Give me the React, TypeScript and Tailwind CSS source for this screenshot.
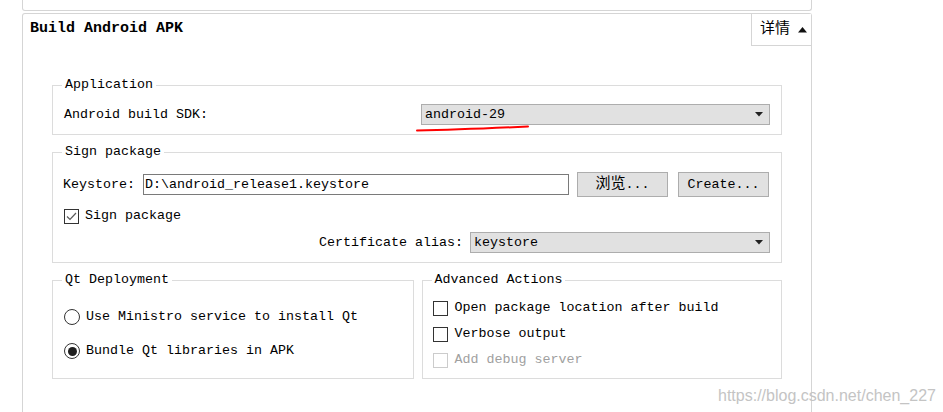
import React from 'react';

const mono = "font-[family-name:'Liberation_Mono','Noto_Sans_CJK_SC',monospace]";

const Arrow = () => (
  <svg width="8" height="5" viewBox="0 0 8 5" className="shrink-0">
    <polygon points="0,0 8,0 4,4.5" fill="#222" />
  </svg>
);

const Combo = ({ value, className }: { value: string; className?: string }) => (
  <div
    className={`flex items-center h-[21px] bg-[#e1e1e1] border border-[#adadad] pl-[3px] pr-[6px] ${className ?? ''}`}
  >
    <span className="flex-1 leading-[16px]">{value}</span>
    <Arrow />
  </div>
);

const Button = ({ children }: { children: React.ReactNode }) => (
  <div className="flex items-center justify-center w-[91px] h-[25px] bg-[#e1e1e1] border border-[#adadad]">
    {children}
  </div>
);

const Check = ({ checked, disabled }: { checked?: boolean; disabled?: boolean }) => (
  <div
    className={`flex items-center justify-center w-[15px] h-[15px] bg-white border ${
      disabled ? 'border-[#cccccc]' : 'border-[#333333]'
    }`}
  >
    {checked && (
      <svg width="11" height="9" viewBox="0 0 11 9">
        <path d="M1 4.5 L4 7.5 L10 1" fill="none" stroke="#5a5a5a" strokeWidth="1.2" />
      </svg>
    )}
  </div>
);

const Radio = ({ checked }: { checked?: boolean }) => (
  <div className="flex items-center justify-center w-[16px] h-[16px] rounded-full bg-white border border-[#333333]">
    {checked && <div className="w-[9px] h-[9px] rounded-full bg-[#1f1f1f]" />}
  </div>
);

const Group = ({
  title,
  className,
  children,
}: {
  title: string;
  className?: string;
  children: React.ReactNode;
}) => (
  <fieldset className={`border border-[#dcdcdc] ${className ?? ''}`}>
    <legend className="ml-[9px] px-[3px] leading-[16px]">{title}</legend>
    {children}
  </fieldset>
);

export default function App() {
  return (
    <div className={`relative h-[412px] overflow-hidden bg-white text-black text-[13.33px] ${mono}`}>
      <div className="pl-[22px]">
        <div className="w-[790px] h-[11px] border-l border-r border-b border-[#d5d5d5] rounded-b-[3px]" />
        <div className="mt-[2px] w-[790px] h-[420px] border-l border-t border-r border-[#d5d5d5] rounded-t-[3px]">
          <div className="flex items-start">
            <div className="flex-1 pl-[7px] pt-[6px] text-[15px] font-bold leading-[18px]">Build Android APK</div>
            <div className="flex items-center gap-[8px] w-[60px] h-[32px] pl-[8px] border-l border-b border-[#d5d5d5] bg-white">
              <span className="text-[15px] leading-[16px]">详情</span>
              <svg width="9" height="6" viewBox="0 0 9 6">
                <polygon points="0,5.5 9,5.5 4.5,0" fill="#111" />
              </svg>
            </div>
          </div>

          <div className="px-[29px] mt-[31px] flex flex-col">
            <Group title="Application">
              <div className="flex items-center pl-[11px] pr-[11px] mt-[11px] pb-[9px]">
                <span className="flex-1 leading-[16px]">Android build SDK:</span>
                <div className="relative">
                  <Combo value="android-29" className="w-[349px]" />
                  <svg
                    width="114"
                    height="8"
                    viewBox="0 0 114 8"
                    className="absolute left-[-5px] top-[20px] pointer-events-none"
                  >
                    <path
                      d="M1 6.5 C 30 6, 60 5, 112 2.5"
                      fill="none"
                      stroke="#ff0000"
                      strokeWidth="2"
                      strokeLinecap="round"
                    />
                  </svg>
                </div>
              </div>
            </Group>

            <Group title="Sign package" className="mt-[9px]">
              <div className="flex items-center pl-[10px] pr-[12px] mt-[12px]">
                <span className="leading-[16px]">Keystore:</span>
                <div className="flex-1 ml-[8px] h-[21px] flex items-center bg-white border border-[#7a7a7a] pl-[1px] leading-[16px]">
                  D:\android_release1.keystore
                </div>
                <div className="ml-[8px]">
                  <Button>
                    <span className="text-[15px] leading-[16px]">浏览</span>
                    <span className="leading-[16px]">...</span>
                  </Button>
                </div>
                <div className="ml-[10px]">
                  <Button>Create...</Button>
                </div>
              </div>
              <div className="flex items-center gap-[6px] pl-[11px] mt-[11px]">
                <Check checked />
                <span className="leading-[16px]">Sign package</span>
              </div>
              <div className="flex items-center justify-end gap-[7px] pr-[11px] mt-[8px] pb-[9px]">
                <span className="leading-[16px]">Certificate alias:</span>
                <Combo value="keystore" className="w-[300px]" />
              </div>
            </Group>

            <div className="flex gap-[8px] mt-[9px]">
              <Group title="Qt Deployment" className="w-[362px]">
                <div className="flex items-center gap-[6px] pl-[11px] mt-[21px]">
                  <Radio />
                  <span className="leading-[16px]">Use Ministro service to install Qt</span>
                </div>
                <div className="flex items-center gap-[6px] pl-[11px] mt-[18px] pb-[19px]">
                  <Radio checked />
                  <span className="leading-[16px]">Bundle Qt libraries in APK</span>
                </div>
              </Group>
              <Group title="Advanced Actions" className="w-[361px]">
                <div className="flex items-center gap-[7px] pl-[10px] mt-[12px]">
                  <Check />
                  <span className="leading-[16px]">Open package location after build</span>
                </div>
                <div className="flex items-center gap-[7px] pl-[10px] mt-[10px]">
                  <Check />
                  <span className="leading-[16px]">Verbose output</span>
                </div>
                <div className="flex items-center gap-[7px] pl-[10px] mt-[10px] pb-[10px]">
                  <Check disabled />
                  <span className="leading-[16px] text-[#a0a0a0]">Add debug server</span>
                </div>
              </Group>
            </div>
          </div>
        </div>
      </div>

      <div className="absolute left-[718px] top-[386px] text-[16px] leading-[20px] text-[#c4c4c4] font-[family-name:'Liberation_Sans',Arial,sans-serif]">
        https://blog.csdn.net/chen_227
      </div>
    </div>
  );
}
